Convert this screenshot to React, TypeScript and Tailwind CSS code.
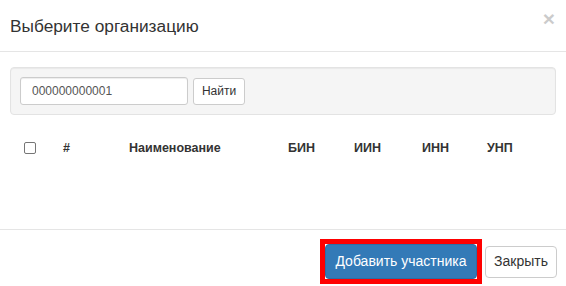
import React from "react";

const columns = [
  { label: "#", w: "w-[66px]" },
  { label: "Наименование", w: "w-[159px]" },
  { label: "БИН", w: "w-[66px]" },
  { label: "ИИН", w: "w-[68px]" },
  { label: "ИНН", w: "w-[65px]" },
  { label: "УНП", w: "w-[60px]" },
];

export default function App() {
  return (
    <div className="w-[566px] h-[286px] bg-white text-[#333] font-['Liberation_Sans',Arial,sans-serif] overflow-hidden">
      {/* header */}
      <div className="h-[52px] border-b border-[#e5e5e5] flex items-start justify-between pl-[10px] pr-[11px]">
        <h4 className="pt-[16px] text-[17.3px] leading-[20px]">Выберите организацию</h4>
        <button className="mt-[8px] text-[21px] leading-[21px] font-bold text-black opacity-20">
          ×
        </button>
      </div>

      {/* body */}
      <div className="h-[177px] px-[10px] pt-[15px]">
        <div className="h-[48px] bg-[#f5f5f5] border border-[#e3e3e3] rounded-[4px] shadow-[inset_0_1px_1px_rgba(0,0,0,0.05)] flex items-center gap-[5px] pl-[9px]">
          <input
            defaultValue="000000000001"
            className="w-[168px] h-[28px] bg-white border border-[#ccc] rounded-[3px] px-[11px] text-[12px] text-[#555] shadow-[inset_0_1px_1px_rgba(0,0,0,0.075)] outline-none"
          />
          <button className="w-[52px] h-[27px] bg-white border border-[#ccc] rounded-[3px] text-[12px] text-[#333]">
            Найти
          </button>
        </div>

        <div className="mt-[25px] flex items-center h-[16px] text-[12.5px] leading-[16px] font-bold">
          <div className="w-[53px] pl-[14px] flex items-center">
            <span className="block w-[12px] h-[12px] border border-[#767676] rounded-[2px] bg-white" />
          </div>
          {columns.map((c) => (
            <div key={c.label} className={c.w}>
              {c.label}
            </div>
          ))}
        </div>
      </div>

      {/* footer */}
      <div className="border-t border-[#e5e5e5] pt-[9px] pr-[9px] flex items-center justify-end gap-[3px]">
        <div className="border-[5px] border-[#ff0000]">
          <button className="block w-[152px] h-[35px] bg-[#337ab7] border border-[#2e6da4] rounded-[4px] text-white text-[14px]">
            Добавить участника
          </button>
        </div>
        <button className="w-[72px] h-[32px] bg-white border border-[#ccc] rounded-[4px] text-[14px] text-[#333]">
          Закрыть
        </button>
      </div>
    </div>
  );
}
